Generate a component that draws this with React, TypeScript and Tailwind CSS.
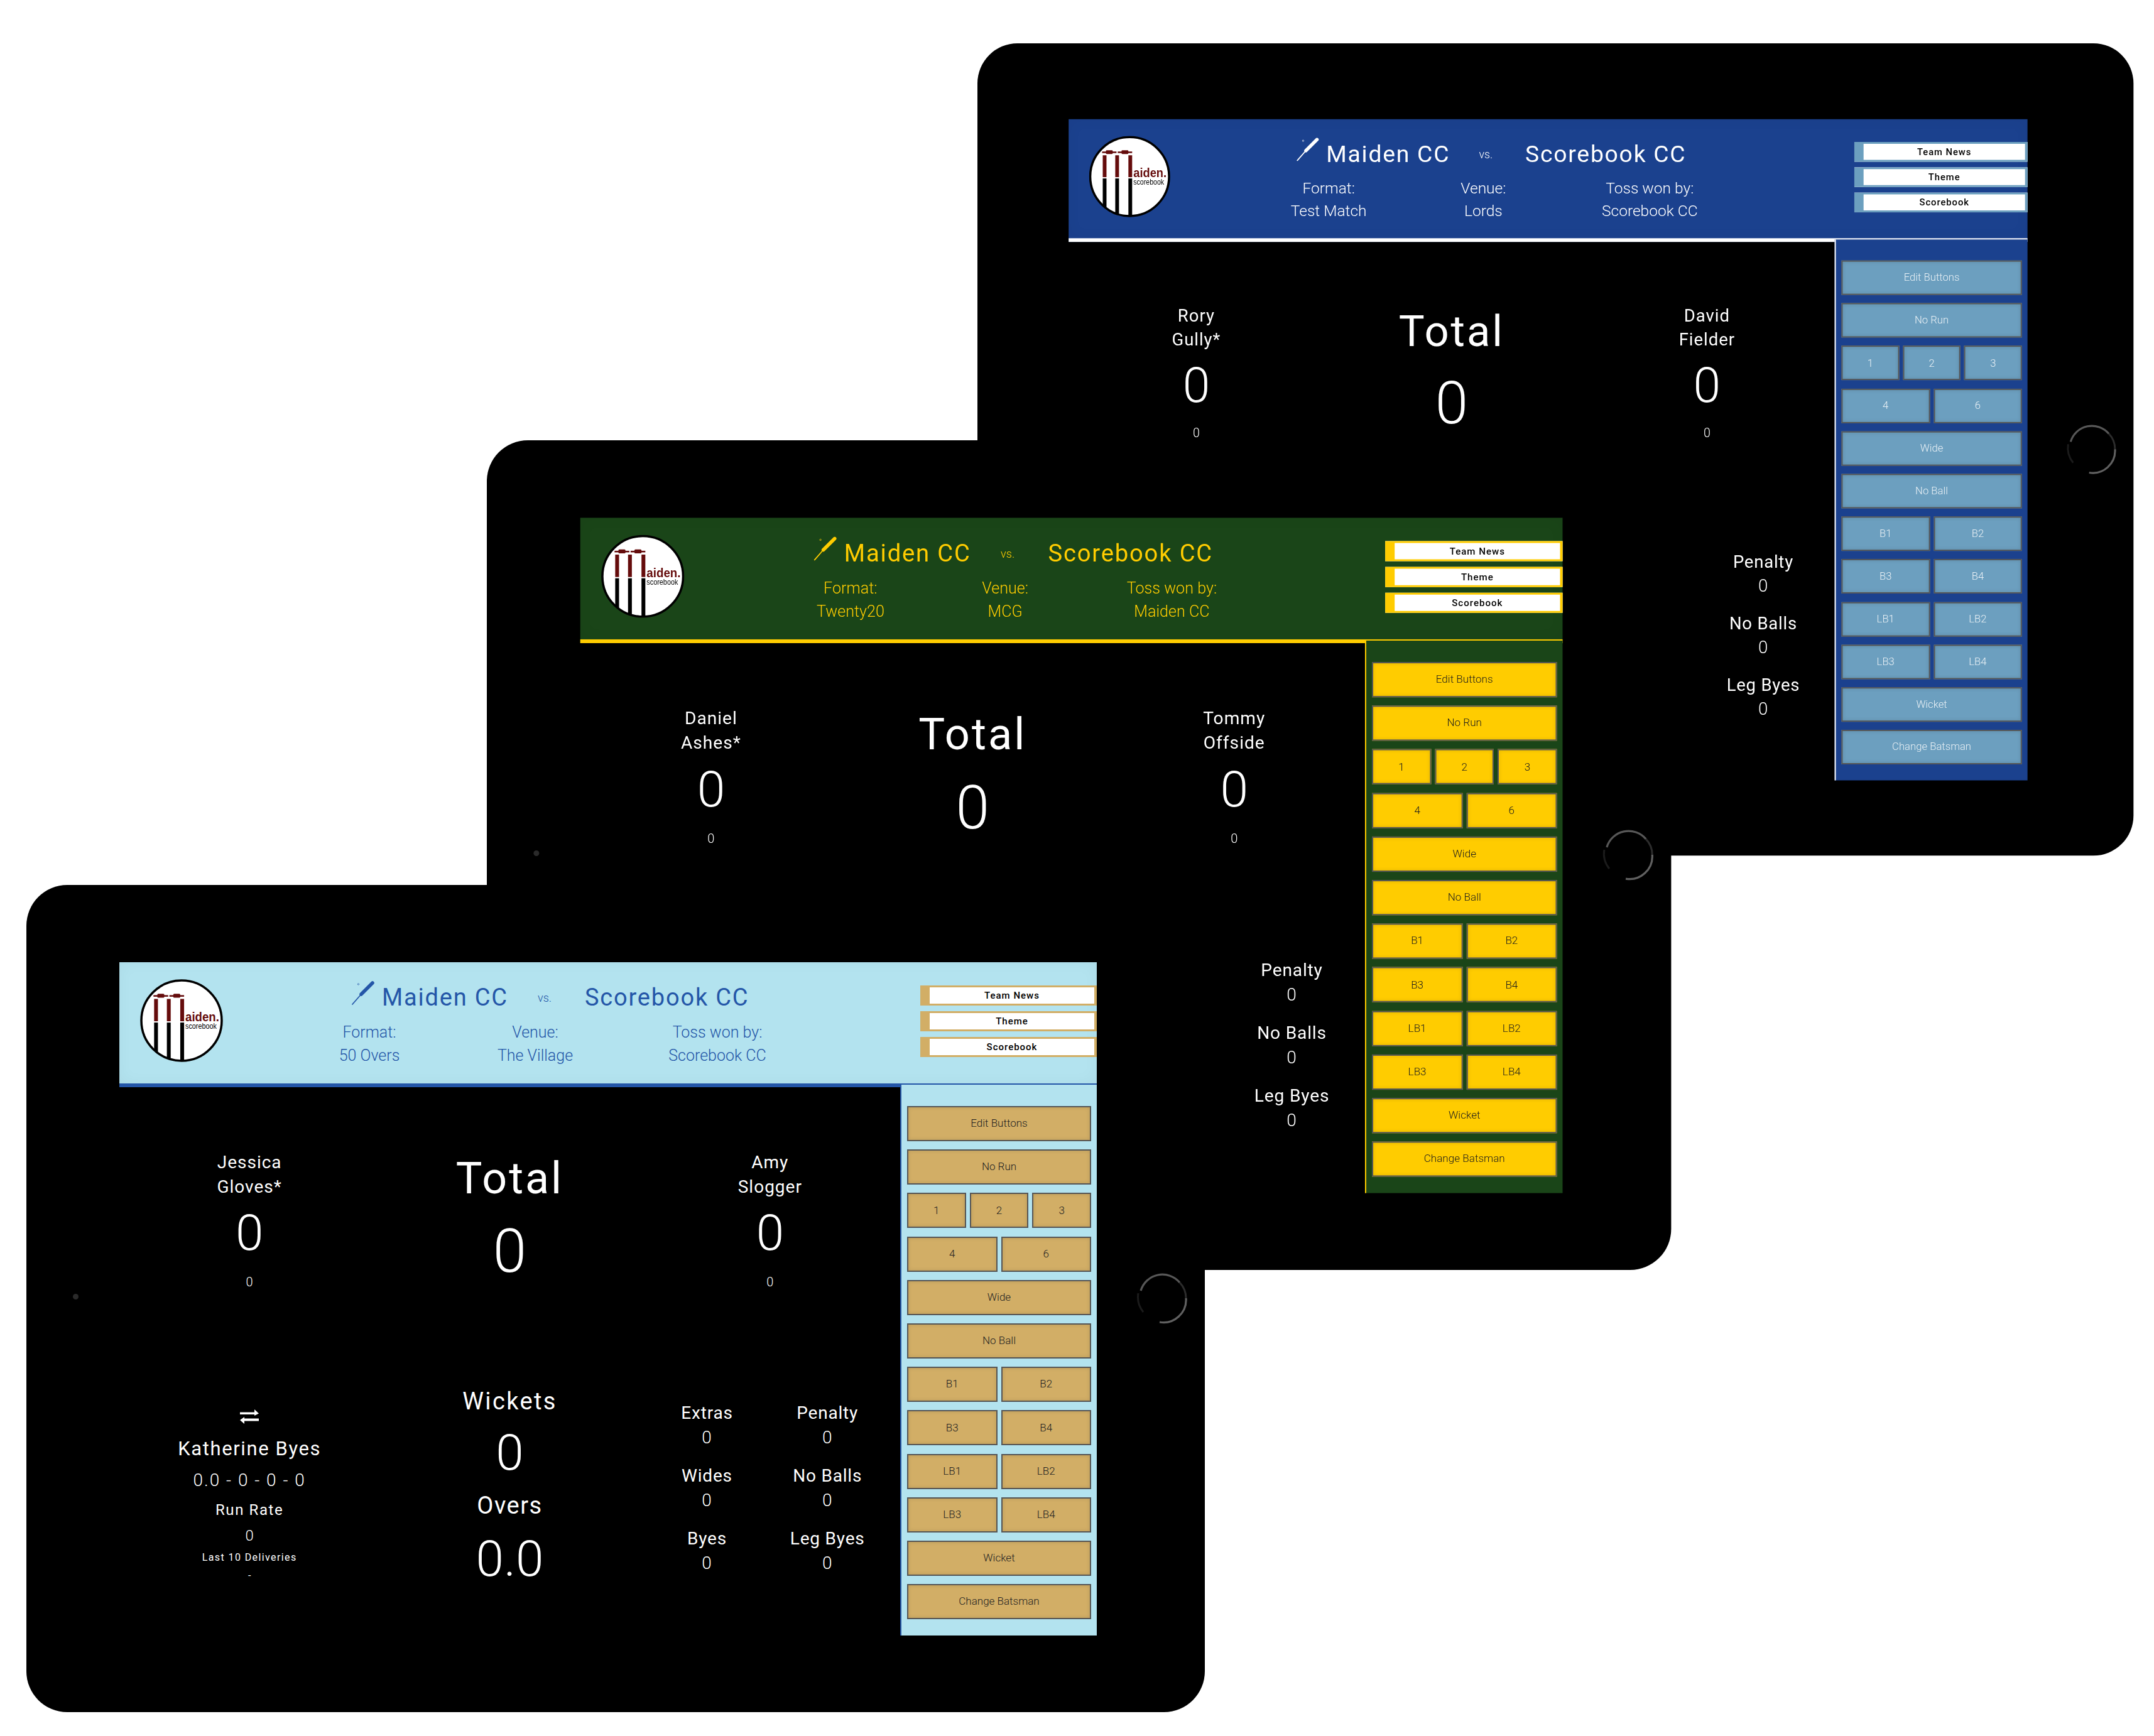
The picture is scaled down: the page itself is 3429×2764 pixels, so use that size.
import React from 'react';

type Theme = {
    place: string;
    panel: string;
    ink: string;
    line: string;
    keyFace: string;
    keyInk: string;
    actionEdge: string;
    infoCols: string;
};

type Board = {
    theme: Theme;
    covered: boolean;
    format: string;
    venue: string;
    toss: string;
    striker: [string, string];
    other: [string, string];
};

const boards: Board[] = [
    {
        theme: {
            place: 'left-[1556px] top-[69px] scale-x-[0.981] scale-y-[0.982]',
            panel: 'bg-[#1b418e]',
            ink: 'text-white',
            line: 'border-white',
            keyFace: 'bg-[#6c9fbf]',
            keyInk: 'text-[#e8f0f5]',
            actionEdge: 'border-[#6c9fbf]',
            infoCols: 'grid-cols-[312px_190px_350px]',
        },
        covered: true,
        format: 'Test Match',
        venue: 'Lords',
        toss: 'Scorebook CC',
        striker: ['Rory', 'Gully*'],
        other: ['David', 'Fielder'],
    },
    {
        theme: {
            place: 'left-[775px] top-[701px] scale-x-[1.005] scale-y-[1.003]',
            panel: 'bg-[#1a4518]',
            ink: 'text-[#ffcc00]',
            line: 'border-[#ffcc00]',
            keyFace: 'bg-[#ffcc00]',
            keyInk: 'text-[#1c1c1c]',
            actionEdge: 'border-[#ffcc00]',
            infoCols: 'grid-cols-[324px_166px_362px]',
        },
        covered: true,
        format: 'Twenty20',
        venue: 'MCG',
        toss: 'Maiden CC',
        striker: ['Daniel', 'Ashes*'],
        other: ['Tommy', 'Offside'],
    },
    {
        theme: {
            place: 'left-[42px] top-[1409px]',
            panel: 'bg-[#b3e3ef]',
            ink: 'text-[#2456a8]',
            line: 'border-[#2456a8]',
            keyFace: 'bg-[#d2ae66]',
            keyInk: 'text-[#222222]',
            actionEdge: 'border-[#d2ae66]',
            infoCols: 'grid-cols-[264px_264px_316px]',
        },
        covered: false,
        format: '50 Overs',
        venue: 'The Village',
        toss: 'Scorebook CC',
        striker: ['Jessica', 'Gloves*'],
        other: ['Amy', 'Slogger'],
    },
];

const keyRows = [
    ['Edit Buttons'],
    ['No Run'],
    ['1', '2', '3'],
    ['4', '6'],
    ['Wide'],
    ['No Ball'],
    ['B1', 'B2'],
    ['B3', 'B4'],
    ['LB1', 'LB2'],
    ['LB3', 'LB4'],
    ['Wicket'],
    ['Change Batsman'],
];

const extras = [
    ['Extras', 'Penalty'],
    ['Wides', 'No Balls'],
    ['Byes', 'Leg Byes'],
];

const Logo = () => (
    <svg viewBox="0 0 130 130" className="w-[132px] h-[132px] shrink-0">
        <defs>
            <clipPath id="logo-clip">
                <circle cx="65" cy="65" r="63" />
            </clipPath>
        </defs>
        <circle cx="65" cy="65" r="63" fill="#fff" stroke="#000" strokeWidth="3.5" />
        <g clipPath="url(#logo-clip)">
            <rect x="21" y="25" width="23" height="2.5" fill="#650c0c" />
            <rect x="46" y="25" width="23" height="2.5" fill="#650c0c" />
            <rect x="27" y="23" width="11" height="6" rx="1.5" fill="#650c0c" />
            <rect x="52" y="23" width="11" height="6" rx="1.5" fill="#650c0c" />
            <rect x="22" y="31" width="6" height="35" fill="#650c0c" />
            <rect x="42" y="31" width="6" height="35" fill="#650c0c" />
            <rect x="63" y="31" width="6" height="35" fill="#650c0c" />
            <rect x="22" y="68" width="6" height="62" fill="#000" />
            <rect x="42" y="68" width="6" height="62" fill="#000" />
            <rect x="63" y="68" width="6" height="62" fill="#000" />
        </g>
        <text x="71" y="66" textLength="53" lengthAdjust="spacingAndGlyphs" fontFamily="'Liberation Sans', sans-serif" fontWeight="700" fontSize="20" fill="#650c0c">aiden.</text>
        <text x="71" y="78" textLength="49" lengthAdjust="spacingAndGlyphs" fontFamily="'Liberation Sans', sans-serif" fontSize="13" fill="#000">scorebook</text>
    </svg>
);

const BatMark = () => (
    <svg viewBox="0 0 38 38" className="w-[38px] h-[38px] shrink-0 -mt-[14px] text-current">
        <path d="M15 21 L33 3" stroke="currentColor" strokeWidth="5.5" strokeLinecap="round" />
        <path d="M15 21 L1 37" stroke="currentColor" strokeWidth="1.8" strokeLinecap="round" />
        <circle cx="10.5" cy="5" r="1.2" fill="none" stroke="currentColor" strokeWidth="0.7" />
    </svg>
);

const SwapMark = () => (
    <svg viewBox="0 0 30 23" className="w-[30px] h-[23px]">
        <path d="M0 4.5H23V0L30 6.5L23 10V8H0Z" fill="#fff" />
        <path d="M30 14.5H7V12L0 17L7 23V18.5H30Z" fill="#fff" />
    </svg>
);

const HomeRing = () => (
    <svg viewBox="0 0 84 84" className="absolute left-[1766px] top-[616px] w-[84px] h-[84px] blur-[0.6px]" fill="none">
        <path d="M8 30 A36 36 0 0 1 70 17" stroke="#575757" strokeWidth="3.2" />
        <path d="M80 42 A36 36 0 0 1 38 80" stroke="#606060" strokeWidth="3.2" />
        <path d="M4 34 A38 38 0 0 0 12 64" stroke="#1b1b1b" strokeWidth="3" />
        <path d="M70 17 A36 36 0 0 1 80 42" stroke="#2c2c2c" strokeWidth="3" />
    </svg>
);

const Header = ({ board }: { board: Board }) => {
    const { theme } = board;
    return (
        <header className={`flex h-[199px] border-b-[6px] pl-[33px] pt-[27px] shadow-[inset_0_0_24px_rgba(0,0,0,0.04)] ${theme.panel} ${theme.line} ${theme.ink}`}>
            <Logo />
            <div className="w-[844px] ml-[101px] mt-[2px] shrink-0">
                <div className="flex items-center h-[54px] pl-[104px] text-[38px] tracking-[1.8px]">
                    <BatMark />
                    <span className="ml-[10px] w-[199px] whitespace-nowrap">Maiden CC</span>
                    <span className="ml-[49px] w-[26px] text-[18px] tracking-normal font-light">vs.</span>
                    <span className="ml-[49px] whitespace-nowrap">Scorebook CC</span>
                </div>
                <div className={`grid mt-[10px] text-[25px] font-light text-center leading-[37px] ${theme.infoCols}`}>
                    <div>Format:<br />{board.format}</div>
                    <div>Venue:<br />{board.venue}</div>
                    <div>Toss won by:<br />{board.toss}</div>
                </div>
            </div>
            <div className="flex flex-col gap-[9px] w-[281px] ml-auto pt-[10px]">
                {['Team News', 'Theme', 'Scorebook'].map(label => (
                    <div
                        key={label}
                        className={`h-[32px] bg-white border-l-[15px] border-r-[4px] border-y-[3px] text-center text-black text-[15px] font-medium tracking-[1px] leading-[26px] ${theme.actionEdge}`}
                    >
                        {label}
                    </div>
                ))}
            </div>
        </header>
    );
};

const KeyPad = ({ theme }: { theme: Theme }) => (
    <aside className={`relative w-[313px] h-[877px] -mt-[4px] border-l-[2px] pl-[9px] pr-[9px] pt-[34px] flex flex-col gap-[13.2px] ${theme.panel} ${theme.line}`}>
        {keyRows.map(row => (
            <div key={row[0]} className="flex gap-[6px]">
                {row.map(label => (
                    <div
                        key={label}
                        className={`flex-1 h-[56px] flex items-center justify-center border-2 border-[#555555] shadow-[inset_0_0_6px_rgba(0,0,0,0.12)] text-[17px] font-light ${theme.keyFace} ${theme.keyInk}`}
                    >
                        {label}
                    </div>
                ))}
            </div>
        ))}
    </aside>
);

const Batter = ({ name }: { name: [string, string] }) => (
    <div className="flex flex-col items-center pt-[100px]">
        <div className="text-[28px] tracking-[1px] leading-[39px] text-center">{name[0]}<br />{name[1]}</div>
        <div className="text-[80px] font-light leading-[80px] mt-[14px]">0</div>
        <div className="text-[20px] font-light leading-[36px] mt-[20px]">0</div>
    </div>
);

const ScorePane = ({ board }: { board: Board }) => (
    <main className="w-[1243px] shrink-0 text-white">
        <div className="grid grid-cols-3 h-[459px]">
            <Batter name={board.striker} />
            <div className="flex flex-col items-center pt-[105px]">
                <div className="text-[70px] tracking-[3px] leading-[80px]">Total</div>
                <div className="text-[96px] font-light leading-[112px] mt-[20px]">0</div>
            </div>
            <Batter name={board.other} />
        </div>
        <div className="grid grid-cols-3">
            <div className={`flex flex-col items-center pt-[38px] ${board.covered ? 'invisible' : ''}`}>
                <div className="h-[54px] flex items-center"><SwapMark /></div>
                <div className="text-[31px] tracking-[1.6px] leading-[50px]">Katherine Byes</div>
                <div className="text-[28px] font-light tracking-[2px] leading-[50px]">0.0 - 0 - 0 - 0</div>
                <div className="text-[24px] tracking-[1.6px] leading-[45px]">Run Rate</div>
                <div className="text-[24px] font-light leading-[37px]">0</div>
                <div className="text-[16px] tracking-[1.4px] leading-[32px]">Last 10 Deliveries</div>
                <div className="text-[16px] leading-[26px]">-</div>
            </div>
            <div className={`flex flex-col items-center ${board.covered ? 'invisible' : ''}`}>
                <div className="text-[38px] tracking-[2.4px] leading-[82px]">Wickets</div>
                <div className="text-[80px] font-light leading-[83px]">0</div>
                <div className="text-[38px] tracking-[1.5px] leading-[84px]">Overs</div>
                <div className="text-[80px] font-light leading-[86px]">0.0</div>
            </div>
            <div className="pl-[11px] pr-[20px] pt-[40px] flex flex-col gap-[22px]">
                {extras.map(row => (
                    <div key={row[0]} className="grid grid-cols-2 text-center text-[28px] leading-[39px] tracking-[0.8px]">
                        <div className={board.covered ? 'invisible' : ''}>{row[0]}<br /><span className="font-light">0</span></div>
                        <div>{row[1]}<br /><span className="font-light">0</span></div>
                    </div>
                ))}
            </div>
        </div>
    </main>
);

const Tablet = ({ board }: { board: Board }) => (
    <section className={`absolute origin-top-left w-[1876px] h-[1317px] rounded-[65px] bg-black pt-[123px] pl-[148px] ${board.theme.place}`}>
        <div className="w-[1556px] h-[1072px]">
            <Header board={board} />
            <div className="flex">
                <ScorePane board={board} />
                <KeyPad theme={board.theme} />
            </div>
        </div>
        <HomeRing />
        <div className="absolute left-[74px] top-[651px] w-[9px] h-[9px] rounded-full bg-[#2a2a2a]" />
    </section>
);

export default function App() {
    return (
        <div className="relative w-[3429px] h-[2764px] overflow-hidden bg-white font-['Roboto','Liberation_Sans',sans-serif]">
            {boards.map(board => (
                <Tablet key={board.format} board={board} />
            ))}
        </div>
    );
}
